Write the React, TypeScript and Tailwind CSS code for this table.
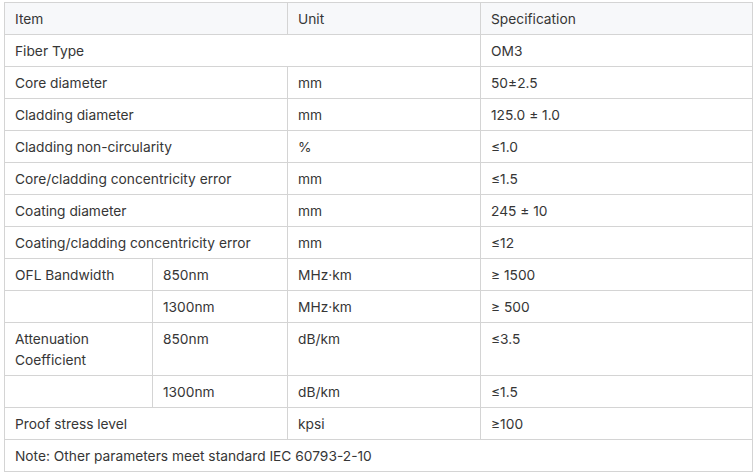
import React from "react";

const td = "border border-[#d4d4d4] px-[10px] pt-[6px] pb-[4px] align-top";

export default function App() {
  const rows: [string, string, string][] = [
    ["Core diameter", "mm", "50±2.5"],
    ["Cladding diameter", "mm", "125.0 ± 1.0"],
    ["Cladding non-circularity", "%", "≤1.0"],
    ["Core/cladding concentricity error", "mm", "≤1.5"],
    ["Coating diameter", "mm", "245 ± 10"],
    ["Coating/cladding concentricity error", "mm", "≤12"],
  ];
  return (
    <div className="w-[754px] h-[472px] bg-white pt-[2px] pl-[4px] overflow-hidden" style={{ fontFamily: "Inter, 'Noto Sans', sans-serif" }}>
      <table className="w-[748px] table-fixed border-collapse text-[13.75px] leading-[21px] text-[#363636]">
        <colgroup>
          <col className="w-[148px]" />
          <col className="w-[135px]" />
          <col className="w-[193px]" />
          <col className="w-[272px]" />
        </colgroup>
        <tbody>
          <tr className="bg-[#f7f8fa]">
            <td className={td} colSpan={2}>Item</td>
            <td className={td}>Unit</td>
            <td className={td}>Specification</td>
          </tr>
          <tr>
            <td className={td} colSpan={3}>Fiber Type</td>
            <td className={td}>OM3</td>
          </tr>
          {rows.map((r) => (
            <tr key={r[0]}>
              <td className={td} colSpan={2}>{r[0]}</td>
              <td className={td}>{r[1]}</td>
              <td className={td}>{r[2]}</td>
            </tr>
          ))}
          <tr>
            <td className={td}>OFL Bandwidth</td>
            <td className={td}>850nm</td>
            <td className={td}>MHz·km</td>
            <td className={td}>≥ 1500</td>
          </tr>
          <tr>
            <td className={td}></td>
            <td className={td}>1300nm</td>
            <td className={td}>MHz·km</td>
            <td className={td}>≥ 500</td>
          </tr>
          <tr>
            <td className={td}>Attenuation Coefficient</td>
            <td className={td}>850nm</td>
            <td className={td}>dB/km</td>
            <td className={td}>≤3.5</td>
          </tr>
          <tr>
            <td className={td}></td>
            <td className={td}>1300nm</td>
            <td className={td}>dB/km</td>
            <td className={td}>≤1.5</td>
          </tr>
          <tr>
            <td className={td} colSpan={2}>Proof stress level</td>
            <td className={td}>kpsi</td>
            <td className={td}>≥100</td>
          </tr>
          <tr>
            <td className={td} colSpan={4}>Note: Other parameters meet standard IEC 60793-2-10</td>
          </tr>
        </tbody>
      </table>
    </div>
  );
}
